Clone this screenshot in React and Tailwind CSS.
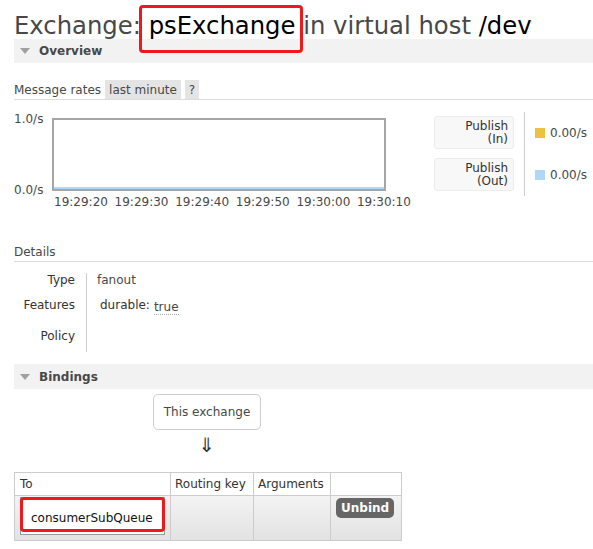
import React from 'react'

const SectionHeader = ({ title, className = '' }) => (
  <div className={`flex items-center bg-[#f2f2f2] pl-[6px] ${className}`}>
    <svg width="10" height="6" viewBox="0 0 10 6" className="mr-[9px]">
      <polygon points="0,0 10,0 5,6" fill="#a0a0a0" />
    </svg>
    <span className="font-bold text-[#484848]">{title}</span>
  </div>
)

const RedBox = ({ className = '' }) => (
  <div className={`absolute border-[3px] border-[#f01818] rounded-[4px] pointer-events-none ${className}`} />
)

const times = ['19:29:20', '19:29:30', '19:29:40', '19:29:50', '19:30:00', '19:30:10']

const legend = [
  { top: 'Publish', bottom: '(In)', color: 'bg-[#edc240]' },
  { top: 'Publish', bottom: '(Out)', color: 'bg-[#afd8f8]' },
]

export default function App() {
  return (
    <div className="w-[593px] h-[549px] overflow-hidden bg-white pl-[14px] text-[12px] leading-[14px] text-[#484848] font-['DejaVu_Sans',Verdana,sans-serif]">
      {/* title */}
      <h1 className="relative z-10 h-[39px] pt-[12px] text-[24.3px] leading-[27px] whitespace-nowrap">
        Exchange:{' '}
        <span className="relative text-black">
          psExchange
          <RedBox className="left-[-10px] right-[-8px] top-[-6px] bottom-[-13px]" />
        </span>{' '}
        in virtual host <span className="text-black">/dev</span>
      </h1>

      <SectionHeader title="Overview" className="h-[24px]" />

      {/* message rates */}
      <div className="mt-[17px] flex items-center h-[19px] border-b border-[#dddddd] box-content">
        <span>Message rates</span>
        <span className="ml-[4px] bg-[#e4e4e4] px-[4px] h-[19px] flex items-center">last minute</span>
        <span className="ml-[4px] bg-[#e4e4e4] px-[4px] h-[19px] flex items-center">?</span>
      </div>

      <div className="flex h-[140px]">
        <div className="w-[420px] pt-[12px]">
          <div className="flex">
            <div className="w-[38px] h-[85px] flex flex-col justify-between">
              <span>1.0/s</span>
              <span>0.0/s</span>
            </div>
            <div className="mt-[6px] w-[334px] h-[73px] border-2 border-[#a6a6a6] flex flex-col justify-end">
              <div className="h-[2px] bg-[#afd8f8]" />
            </div>
          </div>
          <div className="flex ml-[40px] -mt-[2px] whitespace-nowrap">
            {times.map((t) => (
              <span key={t} className="w-[60.6px] shrink-0">{t}</span>
            ))}
          </div>
        </div>

        <div className="flex pt-[12px]">
          <div className="pt-[4px] flex flex-col gap-[9px]">
            {legend.map((l) => (
              <div key={l.bottom} className="w-[80px] h-[33px] bg-[#f8f8f8] border border-[#ececec] rounded-[3px] text-right pr-[5px] pt-[3px] leading-[13px] text-[#333]">
                <div>{l.top}</div>
                <div>{l.bottom}</div>
              </div>
            ))}
          </div>
          <div className="ml-[10px] h-[84px] border-l border-[#cccccc] pl-[10px] pt-[14px] flex flex-col gap-[28px]">
            {legend.map((l) => (
              <div key={l.bottom} className="flex items-center h-[14px]">
                <span className={`w-[10px] h-[10px] ${l.color} mr-[5px]`} />
                <span>0.00/s</span>
              </div>
            ))}
          </div>
        </div>
      </div>

      {/* details */}
      <div className="pt-[5px] pb-[2px] border-b border-[#dddddd]">Details</div>

      <div className="mt-[11px] flex flex-col">
        <div className="flex h-[25px]">
          <div className="w-[61px] text-right text-[#333]">Type</div>
          <div className="ml-[11px] border-l border-[#cccccc] pl-[10px]">fanout</div>
        </div>
        <div className="flex h-[31px]">
          <div className="w-[61px] text-right text-[#333]">Features</div>
          <div className="ml-[11px] border-l border-[#cccccc] pl-[13px] flex items-start">
            <span className="text-[#333]">durable:</span>
            <span className="ml-[4px] mt-[2px] border-b border-dotted border-[#aaaaaa]">true</span>
          </div>
        </div>
        <div className="flex h-[23px]">
          <div className="w-[61px] text-right text-[#333]">Policy</div>
          <div className="ml-[11px] border-l border-[#cccccc] pl-[10px]" />
        </div>
      </div>

      <SectionHeader title="Bindings" className="mt-[12px] h-[25px]" />

      {/* this exchange */}
      <div className="ml-[139px] mt-[5px] w-[108px] h-[36px] border border-[#cccccc] rounded-[5px] flex items-center justify-center">
        This exchange
      </div>
      <div className="ml-[139px] w-[108px] h-[42px] flex items-center justify-center text-[20px] leading-[22px] text-[#333] pb-[12px]">
        ⇓
      </div>

      <table className="border-collapse">
        <thead>
          <tr className="h-[23px]">
            <th className="w-[155px] border border-[#cccccc] text-left font-normal px-[5px] text-[#333]">To</th>
            <th className="w-[83px] border border-[#cccccc] text-left font-normal px-[4px] text-[#333]">Routing key</th>
            <th className="w-[77px] border border-[#cccccc] text-left font-normal px-[4px] text-[#333]">Arguments</th>
            <th className="w-[71px] border border-[#cccccc]" />
          </tr>
        </thead>
        <tbody>
          <tr className="h-[45px] bg-gradient-to-b from-[#f3f3f3] to-[#e2e2e2]">
            <td className="border border-[#cccccc] px-[5px] pt-[1px] align-top">
              <div className="relative w-[145px] h-[38px] bg-white border border-[#999999] pl-[10px] pt-[13px] text-[#111]">
                consumerSubQueue
                <RedBox className="-left-px -right-px -top-px bottom-[2px]" />
              </div>
            </td>
            <td className="border border-[#cccccc]" />
            <td className="border border-[#cccccc]" />
            <td className="border border-[#cccccc] px-[5px] pt-[2px] align-top">
              <span className="inline-flex items-center h-[20px] px-[5px] rounded-[5px] bg-[#666666] text-white font-bold">Unbind</span>
            </td>
          </tr>
        </tbody>
      </table>
    </div>
  )
}
